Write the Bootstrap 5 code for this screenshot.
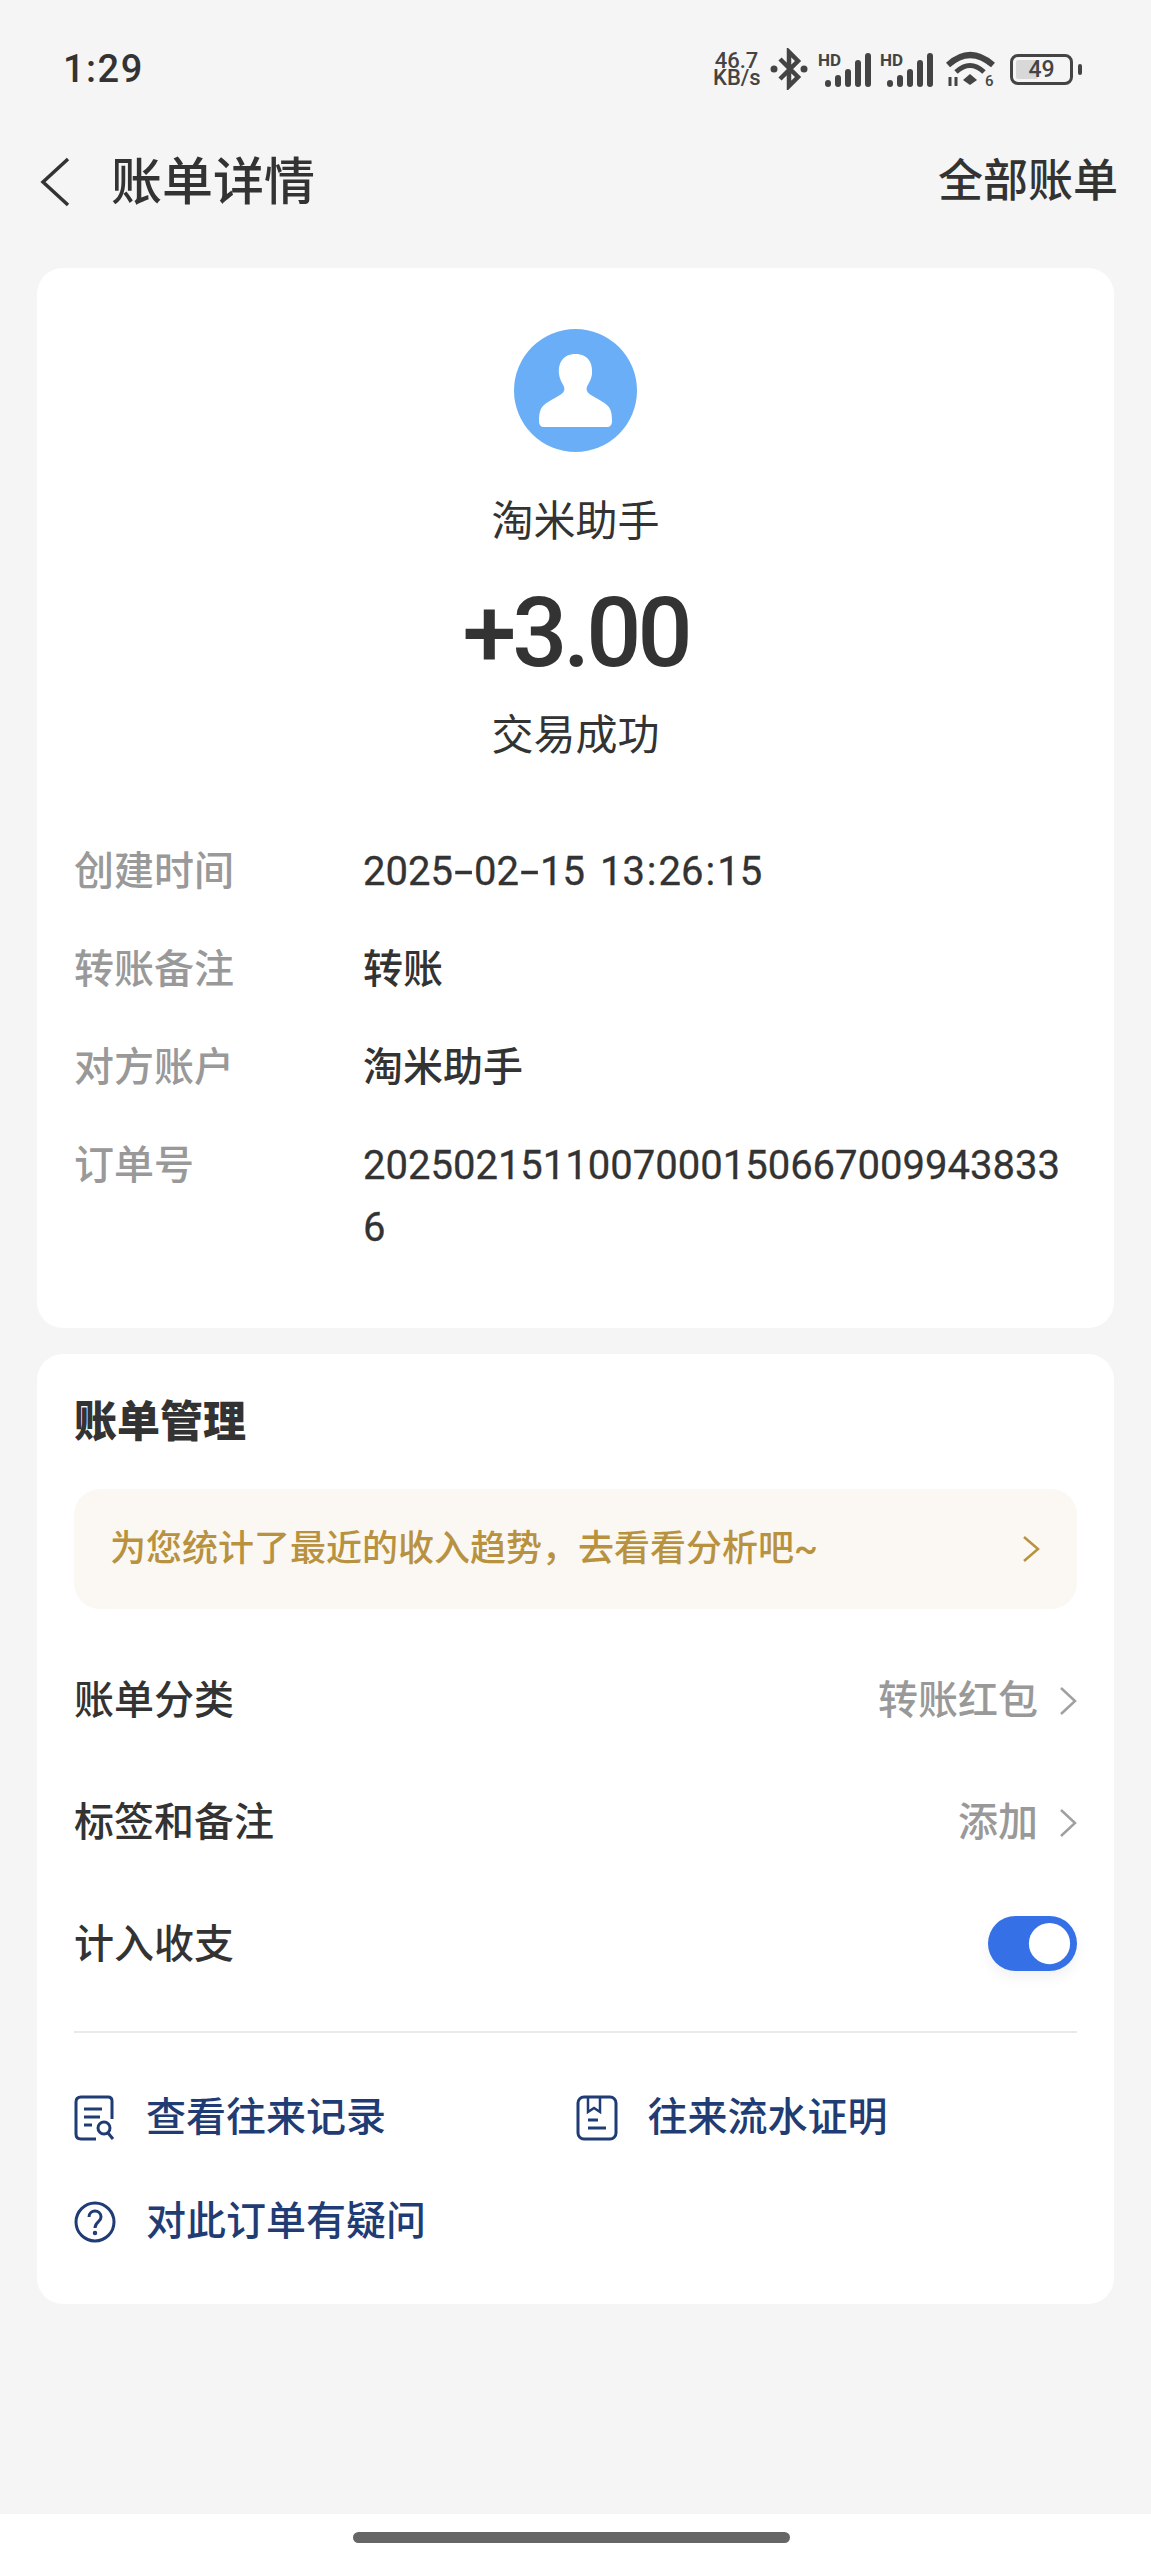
<!DOCTYPE html>
<html lang="zh-CN">
<head>
    <meta charset="UTF-8">
    <meta name="viewport" content="width=device-width, initial-scale=1.0">
    <title>账单详情</title>
    <link href="https://cdn.jsdelivr.net/npm/bootstrap@5.3.0/dist/css/bootstrap.min.css" rel="stylesheet">
    <style>
        html, body { height: 2560px; overflow: hidden; }
        body { background: #f5f5f5; color: #333; font-family: Roboto, "Noto Sans CJK SC", sans-serif; font-size: 40px; line-height: 62px; font-weight: 500; }
        .page-wrap { height: 2514px; }
        .status-bar { height: 136px; padding: 2px 69px 0 63px; }
        .status-time { font-size: 38px; font-weight: 500; letter-spacing: 1.500px; line-height: 1; }
        .net-speed { font-size: 22px; font-weight: 500; text-align: center; width: 47px; color: #444; }
        .net-speed div { height: 17px; line-height: 17px; }
        .ico-bt { margin-left: 10px; }
        .ico-hd { margin-left: 10px; }
        .ico-wifi { margin-left: 12px; }
        .batt-box { width: 63px; height: 31px; margin-left: 14px; border: 3px solid #444; border-radius: 8px; position: relative; font-size: 23px; line-height: 25px; font-weight: 500; text-align: center; color: #444; }
        .batt-fill { position: absolute; left: 3px; top: 3px; bottom: 3px; width: 22px; background: #d8d8d8; border-radius: 2px; }
        .batt-num { position: relative; }
        .batt-nub { width: 4px; height: 11px; background: #444; border-radius: 2px; margin-left: 5px; }
        .head-bar { height: 88px; padding: 3px 33px 0 40px; }
        .head-title { font-size: 51px; font-weight: 500; margin: 2px 0 0 41px; line-height: 1; }
        .head-link { font-size: 45px; font-weight: 500; line-height: 1; }
        .bill-card { margin: 0 37px; border: 0; border-radius: 26px; background: #fff; }
        .card-top { margin-top: 44px; height: 1060px; padding: 61px 37px 0; }
        .card-manage { margin-top: 26px; height: 950px; padding: 37px 37px 0; }
        .avatar { width: 123px; height: 123px; border-radius: 50%; background: #69aef7; }
        .payee { margin-top: 39px; line-height: 62px; font-size: 42px; font-weight: 400; }
        .amount { font-size: 97px; font-weight: 500; line-height: 100px; margin-top: 30px; letter-spacing: -4px; }
        .pay-status { margin-top: 22px; line-height: 62px; font-size: 42px; font-weight: 400; }
        .info-list { margin-top: 74px; }
        .info-row { min-height: 98px; }
        .info-label { width: 289px; flex: none; color: #999; }
        .info-value { flex: 1; word-break: break-all; word-spacing: 5px; }
        .num-val { font-weight: 400; -webkit-text-stroke: .3px #333; }
        .date-dash { display: inline-block; transform: scaleX(1.7); margin: 0 5px; }
        .date-colon { margin: 0 2px; }
        .manage-title { font-weight: 900; font-size: 43px; line-height: 62px; }
        .tip-box { margin-top: 36px; height: 120px; background: #fbf8f3; border-radius: 26px; padding: 0 37px 0 36px; color: #b8923f; font-size: 36px; font-weight: 500; }
        .opt-row { height: 122px; }
        .opt-first { margin-top: 31px; }
        .opt-value { color: #999; }
        .opt-chev { margin-left: 21px; }
        .form-switch .toggle-input { width: 89px; height: 55px; margin: -4px 0 0; background-color: #3570e6; border: 0; box-shadow: 0 6px 14px rgba(0, 0, 0, .06); }
        .rule-line { margin: 25px 0 0; border-top: 2px solid #e9e9e9; opacity: 1; }
        .link-list { margin-top: 54px; color: #1f3c74; font-weight: 500; }
        .link-row { height: 104px; }
        .link-item { width: 502px; gap: 30px; align-items: center; line-height: 62px; height: 62px; }
        .home-area { height: 46px; background: #fff; }
        .home-bar { width: 437px; height: 11px; border-radius: 6px; background: #666; margin: 2px 8px 0 0; }
    </style>
</head>
<body>
    <div class="page-wrap">
        <div class="status-bar d-flex align-items-center justify-content-between">
            <div class="status-time">1:29</div>
            <div class="d-flex align-items-center">
                <div class="net-speed"><div>46.7</div><div>KB/s</div></div>
                <svg class="ico-bt" width="38" height="42" viewBox="0 0 38 42" fill="none"><path d="M10 11 L28 29 L19 38 V4 L28 13 L10 31" stroke="#444" stroke-width="4.5"/><circle cx="4" cy="21" r="3.5" fill="#444"/><circle cx="34" cy="21" r="3.5" fill="#444"/></svg>
                <svg class="ico-hd" width="54" height="36" viewBox="0 0 54 36"><text x="0" y="15" font-family="Roboto" font-size="17" font-weight="700" fill="#444">HD</text><g stroke="#444" stroke-width="6" stroke-linecap="round"><path d="M10 32V33"/><path d="M20 27V33"/><path d="M30 21V33"/><path d="M40 12V33"/><path d="M50 5V33"/></g></svg>
                <svg class="ms-2" width="54" height="36" viewBox="0 0 54 36"><text x="0" y="15" font-family="Roboto" font-size="17" font-weight="700" fill="#444">HD</text><g stroke="#444" stroke-width="6" stroke-linecap="round"><path d="M10 32V33"/><path d="M20 27V33"/><path d="M30 21V33"/><path d="M40 12V33"/><path d="M50 5V33"/></g></svg>
                <svg class="ico-wifi" width="50" height="42" viewBox="0 0 50 42" fill="none"><path d="M2 17 Q24 -3 47 17" stroke="#444" stroke-width="6"/><path d="M10 24 Q24 11 38 24" stroke="#444" stroke-width="5"/><path d="M17 32 L24 26 L31 32 L24 37Z" fill="#444"/><path d="M4 29V38M10 29V38" stroke="#444" stroke-width="3"/><text x="39" y="38" font-family="Roboto" font-size="15" font-weight="500" fill="#444">6</text></svg>
                <div class="batt-box"><span class="batt-fill"></span><span class="batt-num">49</span></div>
                <div class="batt-nub"></div>
            </div>
        </div>
        <div class="head-bar d-flex align-items-center justify-content-between">
            <div class="d-flex align-items-center">
                <svg width="30" height="50" viewBox="0 0 30 50" fill="none"><path d="M28 2 L3 25 L28 48" stroke="#333" stroke-width="3.500"/></svg>
                <div class="head-title">账单详情</div>
            </div>
            <div class="head-link">全部账单</div>
        </div>

        <div class="card bill-card card-top">
            <div class="d-flex flex-column align-items-center">
                <div class="avatar d-flex align-items-center justify-content-center">
                    <svg width="73" height="74" viewBox="0 0 73 74"><path d="M36.500 0 C49 0 54 9 53 20 C52 29 46 32 48 37 C50 42 62 45 69 52 C72 55 73 60 73 67 C73 71 71 73 68 73 H5 C2 73 0 71 0 67 C0 60 1 55 4 52 C11 45 23 42 25 37 C27 32 21 29 20 20 C19 9 24 0 36.500 0Z" fill="#fff"/></svg>
                </div>
                <div class="payee">淘米助手</div>
                <div class="amount">+3.00</div>
                <div class="pay-status">交易成功</div>
            </div>
            <div class="info-list">
                <div class="info-row d-flex"><div class="info-label">创建时间</div><div class="info-value num-val">2025<span class="date-dash">-</span>02<span class="date-dash">-</span>15 13<span class="date-colon">:</span>26<span class="date-colon">:</span>15</div></div>
                <div class="info-row d-flex"><div class="info-label">转账备注</div><div class="info-value">转账</div></div>
                <div class="info-row d-flex"><div class="info-label">对方账户</div><div class="info-value">淘米助手</div></div>
                <div class="info-row d-flex"><div class="info-label">订单号</div><div class="info-value num-val">20250215110070001506670099438336</div></div>
            </div>
        </div>

        <div class="card bill-card card-manage">
            <div class="manage-title">账单管理</div>
            <div class="tip-box d-flex align-items-center justify-content-between">
                <span>为您统计了最近的收入趋势，去看看分析吧~</span>
                <svg width="18" height="28" viewBox="0 0 18 28" fill="none"><path d="M2 2 L16 14 L2 26" stroke="#b8923f" stroke-width="2.500"/></svg>
            </div>
            <div class="opt-row opt-first d-flex align-items-center justify-content-between">
                <span>账单分类</span>
                <span class="d-flex align-items-center"><span class="opt-value">转账红包</span><svg class="opt-chev" width="18" height="30" viewBox="0 0 18 30" fill="none"><path d="M2 2 L16 15 L2 28" stroke="#a0a0a0" stroke-width="2.500"/></svg></span>
            </div>
            <div class="opt-row d-flex align-items-center justify-content-between">
                <span>标签和备注</span>
                <span class="d-flex align-items-center"><span class="opt-value">添加</span><svg class="opt-chev" width="18" height="30" viewBox="0 0 18 30" fill="none"><path d="M2 2 L16 15 L2 28" stroke="#a0a0a0" stroke-width="2.500"/></svg></span>
            </div>
            <div class="opt-row d-flex align-items-center justify-content-between">
                <span>计入收支</span>
                <div class="form-check form-switch m-0 p-0 d-flex"><input class="form-check-input toggle-input" type="checkbox" role="switch" checked></div>
            </div>
            <hr class="rule-line">
            <div class="link-list">
                <div class="link-row d-flex">
                    <div class="link-item d-flex">
                        <svg width="42" height="46" viewBox="0 0 42 46" fill="none" stroke="#1f3c74" stroke-width="3"><path d="M38 24 V6 Q38 2 34 2 H7 Q2 2 2 7 V39 Q2 44 7 44 H22"/><path d="M10 14 H28 M10 22 H26 M10 30 H18"/><circle cx="30" cy="33" r="6"/><path d="M34 38 L39 44"/></svg>
                        <span>查看往来记录</span>
                    </div>
                    <div class="link-item d-flex">
                        <svg width="42" height="46" viewBox="0 0 42 46" fill="none" stroke="#1f3c74" stroke-width="3"><rect x="2" y="2" width="38" height="42" rx="6"/><path d="M12 2 V17 L18 13 L24 17 V2" stroke-width="2.500"/><path d="M12 25 H22 M12 33 H30"/></svg>
                        <span>往来流水证明</span>
                    </div>
                </div>
                <div class="link-row d-flex">
                    <div class="link-item d-flex">
                        <svg width="42" height="42" viewBox="0 0 42 42" fill="none" stroke="#1f3c74" stroke-width="3"><circle cx="21" cy="21" r="19"/><path d="M15 16 C15 8 27 8 27 16 C27 21 21 21 21 27"/><circle cx="21" cy="32" r="1" stroke-width="2.500"/></svg>
                        <span>对此订单有疑问</span>
                    </div>
                </div>
            </div>
        </div>
    </div>
    <div class="home-area d-flex justify-content-center align-items-start pt-3">
        <div class="home-bar"></div>
    </div>
    <script src="https://cdn.jsdelivr.net/npm/bootstrap@5.3.0/dist/js/bootstrap.bundle.min.js"></script>
</body>
</html>
